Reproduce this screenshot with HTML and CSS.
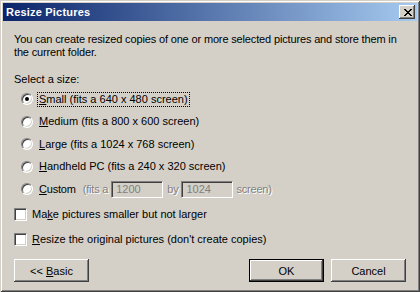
FILE: index.html
```
<!doctype html>
<html lang="en">
<head>
	<meta charset="UTF-8">
	<title>Resize Pictures</title>
	<link rel="stylesheet" href="styles.css">
</head>
<body>
	<div class="window">
		<div class="titlebar">
			<span class="title">Resize Pictures</span>
			<span class="close-btn">
				<svg width="8" height="7" viewBox="0 0 8 7">
					<path d="M0 0h2v1h-2zM6 0h2v1h-2zM1 1h2v1h-2zM5 1h2v1h-2zM2 2h4v1h-4zM3 3h2v1h-2zM2 4h4v1h-4zM1 5h2v1h-2zM5 5h2v1h-2zM0 6h2v1h-2zM6 6h2v1h-2z" fill="#000"/>
				</svg>
			</span>
		</div>
		<div class="content">
			<p class="intro">You can create resized copies of one or more selected pictures and store them in<br>the current folder.</p>
			<div class="group-label">Select a size:</div>
			<div class="options">
				<div class="option">
					<span class="radio checked"></span>
					<span class="label focused"><u>S</u>mall (fits a 640 x 480 screen)</span>
				</div>
				<div class="option">
					<span class="radio"></span>
					<span class="label"><u>M</u>edium (fits a 800 x 600 screen)</span>
				</div>
				<div class="option">
					<span class="radio"></span>
					<span class="label"><u>L</u>arge (fits a 1024 x 768 screen)</span>
				</div>
				<div class="option">
					<span class="radio"></span>
					<span class="label"><u>H</u>andheld PC (fits a 240 x 320 screen)</span>
				</div>
				<div class="option custom">
					<span class="radio"></span>
					<span class="label"><u>C</u>ustom</span>
					<span class="disabled fits">(fits a</span>
					<span class="field">1200</span>
					<span class="disabled by">by</span>
					<span class="field">1024</span>
					<span class="disabled end">screen)</span>
				</div>
			</div>
			<div class="checks">
				<div class="check-row">
					<span class="checkbox"></span>
					<span class="label">Ma<u>k</u>e pictures smaller but not larger</span>
				</div>
				<div class="check-row">
					<span class="checkbox"></span>
					<span class="label"><u>R</u>esize the original pictures (don't create copies)</span>
				</div>
			</div>
			<div class="buttons">
				<span class="btn"><span>&lt;&lt; <u>B</u>asic</span></span>
				<span class="spacer"></span>
				<span class="btn default">OK</span>
				<span class="btn">Cancel</span>
			</div>
		</div>
	</div>
</body>
</html>
```
FILE: styles.css
```
* {
	box-sizing: border-box;
}
body {
	margin: 0;
	background: #d4d0c8;
	font-family: "Liberation Sans", "DejaVu Sans", sans-serif;
	font-size: 11px;
	color: #000;
}
u {
	text-decoration: underline;
	text-underline-offset: 1px;
}
.window {
	width: 420px;
	height: 292px;
	padding: 3px;
	background: #d4d0c8;
	box-shadow: inset 1px 1px #d4d0c8, inset -1px -1px #404040, inset 2px 2px #fff, inset -2px -2px #808080;
	display: flex;
	flex-direction: column;
}
.titlebar {
	height: 18px;
	flex: none;
	display: flex;
	align-items: center;
	justify-content: space-between;
	padding: 0 2px 0 3px;
	background: linear-gradient(to right, #0a246a, #a6caf0);
}
.title {
	color: #fff;
	font-weight: bold;
	font-size: 11px;
	letter-spacing: 0.2px;
}
.close-btn {
	width: 16px;
	height: 14px;
	display: flex;
	align-items: center;
	justify-content: center;
	padding-left: 1px;
	background: #d4d0c8;
	box-shadow: inset -1px -1px #404040, inset 1px 1px #fff, inset -2px -2px #808080;
}
.content {
	flex: 1;
	display: flex;
	flex-direction: column;
	padding: 12px 11px 7px;
}
.intro {
	margin: 0;
	line-height: 13px;
	white-space: nowrap;
	letter-spacing: -0.15px;
}
.group-label {
	margin-top: 14px;
	line-height: 13px;
}
.options {
	padding-left: 7px;
	margin-top: 2px;
}
.option {
	height: 22.5px;
	display: flex;
	align-items: center;
}
.radio {
	width: 12px;
	height: 12px;
	border-radius: 50%;
	background: #fff;
	border: 1px solid;
	border-color: #808080 #fff #fff #808080;
	box-shadow: inset 1px 1px #404040, inset -1px -1px #d4d0c8;
	position: relative;
	flex: none;
}
.radio.checked::after {
	content: "";
	position: absolute;
	left: 3px;
	top: 3px;
	width: 4px;
	height: 4px;
	border-radius: 50%;
	background: #000;
}
.option .label {
	margin-left: 4px;
	padding: 0 1px;
	line-height: 13px;
	border: 1px solid transparent;
}
.label.focused {
	border: 1px dotted #000;
}
.custom {
	letter-spacing: -0.2px;
}
.disabled {
	color: #808080;
	text-shadow: 1px 1px #fff;
}
.fits {
	margin-left: 5px;
}
.field {
	width: 52px;
	height: 17px;
	margin-left: 3px;
	padding: 1px 4px;
	color: #808080;
	line-height: 13px;
	letter-spacing: 0;
	border: 1px solid;
	border-color: #808080 #fff #fff #808080;
	box-shadow: inset 1px 1px #404040, inset -1px -1px #d4d0c8;
}
.by {
	margin-left: 4px;
}
.end {
	margin-left: 3px;
}
.checks {
	margin-top: 1px;
}
.check-row {
	height: 25px;
	display: flex;
	align-items: center;
}
.checkbox {
	width: 13px;
	height: 13px;
	background: #fff;
	border: 1px solid;
	border-color: #808080 #fff #fff #808080;
	box-shadow: inset 1px 1px #404040, inset -1px -1px #d4d0c8;
	flex: none;
}
.check-row .label {
	margin-left: 5px;
}
.buttons {
	margin-top: auto;
	display: flex;
	gap: 7px;
}
.spacer {
	flex: 1;
}
.btn {
	width: 75px;
	height: 23px;
	flex: none;
	display: flex;
	align-items: center;
	justify-content: center;
	background: #d4d0c8;
	box-shadow: inset -1px -1px #404040, inset 1px 1px #fff, inset -2px -2px #808080;
}
.btn.default {
	border: 1px solid #000;
}
```
